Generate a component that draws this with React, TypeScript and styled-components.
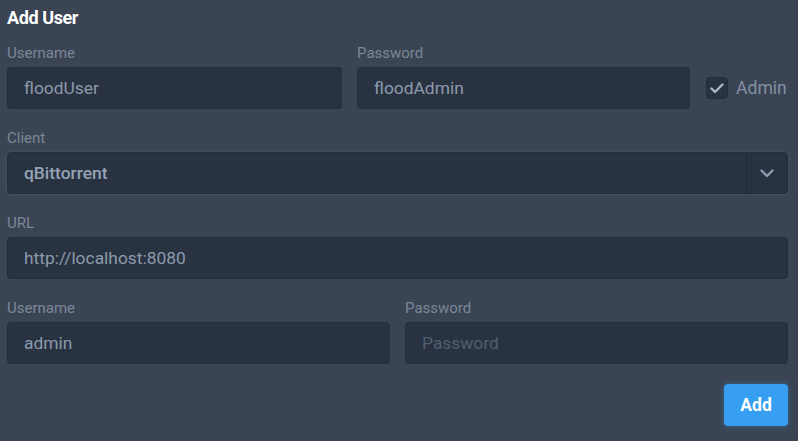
import React from 'react';
import styled, { createGlobalStyle } from 'styled-components';

const GlobalStyle = createGlobalStyle`
  html, body {
    margin: 0;
    padding: 0;
    background: #3a4453;
  }
  body {
    font-family: Roboto, "Liberation Sans", sans-serif;
    -webkit-font-smoothing: antialiased;
  }
`;

const Page = styled.div`
  width: 798px;
  height: 441px;
  box-sizing: border-box;
  padding: 0 10px 0 7px;
  background: #3a4453;
  overflow: hidden;
`;

const Title = styled.h1`
  margin: 0;
  padding-top: 7px;
  font-size: 18px;
  line-height: 22px;
  font-weight: 700;
  color: #ffffff;
  letter-spacing: -0.4px;
`;

const Form = styled.form`
  display: flex;
  flex-direction: column;
  gap: 20px;
  margin-top: 15px;
`;

const Row = styled.div<{ cols?: string }>`
  display: grid;
  grid-template-columns: ${props => props.cols || '1fr'};
  column-gap: 15px;
  align-items: end;
`;

const Field = styled.label`
  display: flex;
  flex-direction: column;
  gap: 5px;
  min-width: 0;
`;

const Label = styled.span`
  font-size: 15px;
  line-height: 18px;
  color: #7a8799;
`;

const Input = styled.input`
  box-sizing: border-box;
  height: 42px;
  width: 100%;
  padding: 0 16px;
  border: 1px solid #252d39;
  border-radius: 4px;
  background: #293241;
  color: #8c9aac;
  font-family: inherit;
  font-size: 17.4px;
  outline: none;

  &::placeholder {
    color: #525e70;
  }
`;

const Select = styled.div`
  display: flex;
  align-items: stretch;
  height: 42px;
  box-sizing: border-box;
  border: 1px solid #252d39;
  border-radius: 4px;
  background: #293241;
  box-shadow: 0 0 4px rgba(90, 104, 124, 0.55);
`;

const SelectValue = styled.div`
  flex: 1;
  display: flex;
  align-items: center;
  padding: 0 16px;
  font-size: 17.4px;
  font-weight: 500;
  color: #95a3b5;
`;

const SelectToggle = styled.div`
  width: 40px;
  display: flex;
  align-items: center;
  justify-content: center;
  border-left: 1px solid #232b37;
  color: #8c9cb0;
`;

const CheckLabel = styled.label`
  display: flex;
  align-items: center;
  gap: 8px;
  height: 42px;
  padding-left: 1px;
  font-size: 17.6px;
  color: #8290a2;
`;

const CheckBox = styled.span`
  width: 22px;
  height: 22px;
  box-sizing: border-box;
  border-radius: 4px;
  background: #293241;
  border: 1px solid #252d39;
  display: flex;
  align-items: center;
  justify-content: center;
  color: #aab7c6;
`;

const Actions = styled.div`
  display: flex;
  justify-content: flex-end;
`;

const Button = styled.button`
  width: 64px;
  height: 42px;
  border: none;
  border-radius: 4px;
  background: #379ff2;
  color: #ffffff;
  font-family: inherit;
  font-size: 17.5px;
  font-weight: 700;
  box-shadow: 0 0 6px rgba(55, 159, 242, 0.35);
  cursor: pointer;
`;

const Chevron = () => (
  <svg width="14" height="9" viewBox="0 0 14 9" fill="none">
    <path d="M1.5 1.5 L7 7 L12.5 1.5" stroke="currentColor" strokeWidth="2.4" strokeLinecap="round" strokeLinejoin="round" />
  </svg>
);

const Check = () => (
  <svg width="14" height="11" viewBox="0 0 14 11" fill="none">
    <path d="M1.5 5.5 L5 9 L12.5 1.5" stroke="currentColor" strokeWidth="2.4" strokeLinecap="round" strokeLinejoin="round" />
  </svg>
);

const App: React.FC = () => {
  return (
    <Page>
      <GlobalStyle />
      <Title>Add User</Title>
      <Form onSubmit={e => e.preventDefault()}>
        <Row cols="335px 333px 1fr">
          <Field>
            <Label>Username</Label>
            <Input defaultValue="floodUser" />
          </Field>
          <Field>
            <Label>Password</Label>
            <Input defaultValue="floodAdmin" />
          </Field>
          <CheckLabel>
            <CheckBox><Check /></CheckBox>
            Admin
          </CheckLabel>
        </Row>
        <Row>
          <Field as="div">
            <Label>Client</Label>
            <Select>
              <SelectValue>qBittorrent</SelectValue>
              <SelectToggle><Chevron /></SelectToggle>
            </Select>
          </Field>
        </Row>
        <Row>
          <Field>
            <Label>URL</Label>
            <Input defaultValue="http://localhost:8080" />
          </Field>
        </Row>
        <Row cols="1fr 1fr">
          <Field>
            <Label>Username</Label>
            <Input defaultValue="admin" />
          </Field>
          <Field>
            <Label>Password</Label>
            <Input type="password" placeholder="Password" />
          </Field>
        </Row>
        <Actions>
          <Button type="submit">Add</Button>
        </Actions>
      </Form>
    </Page>
  );
};

export default App;
